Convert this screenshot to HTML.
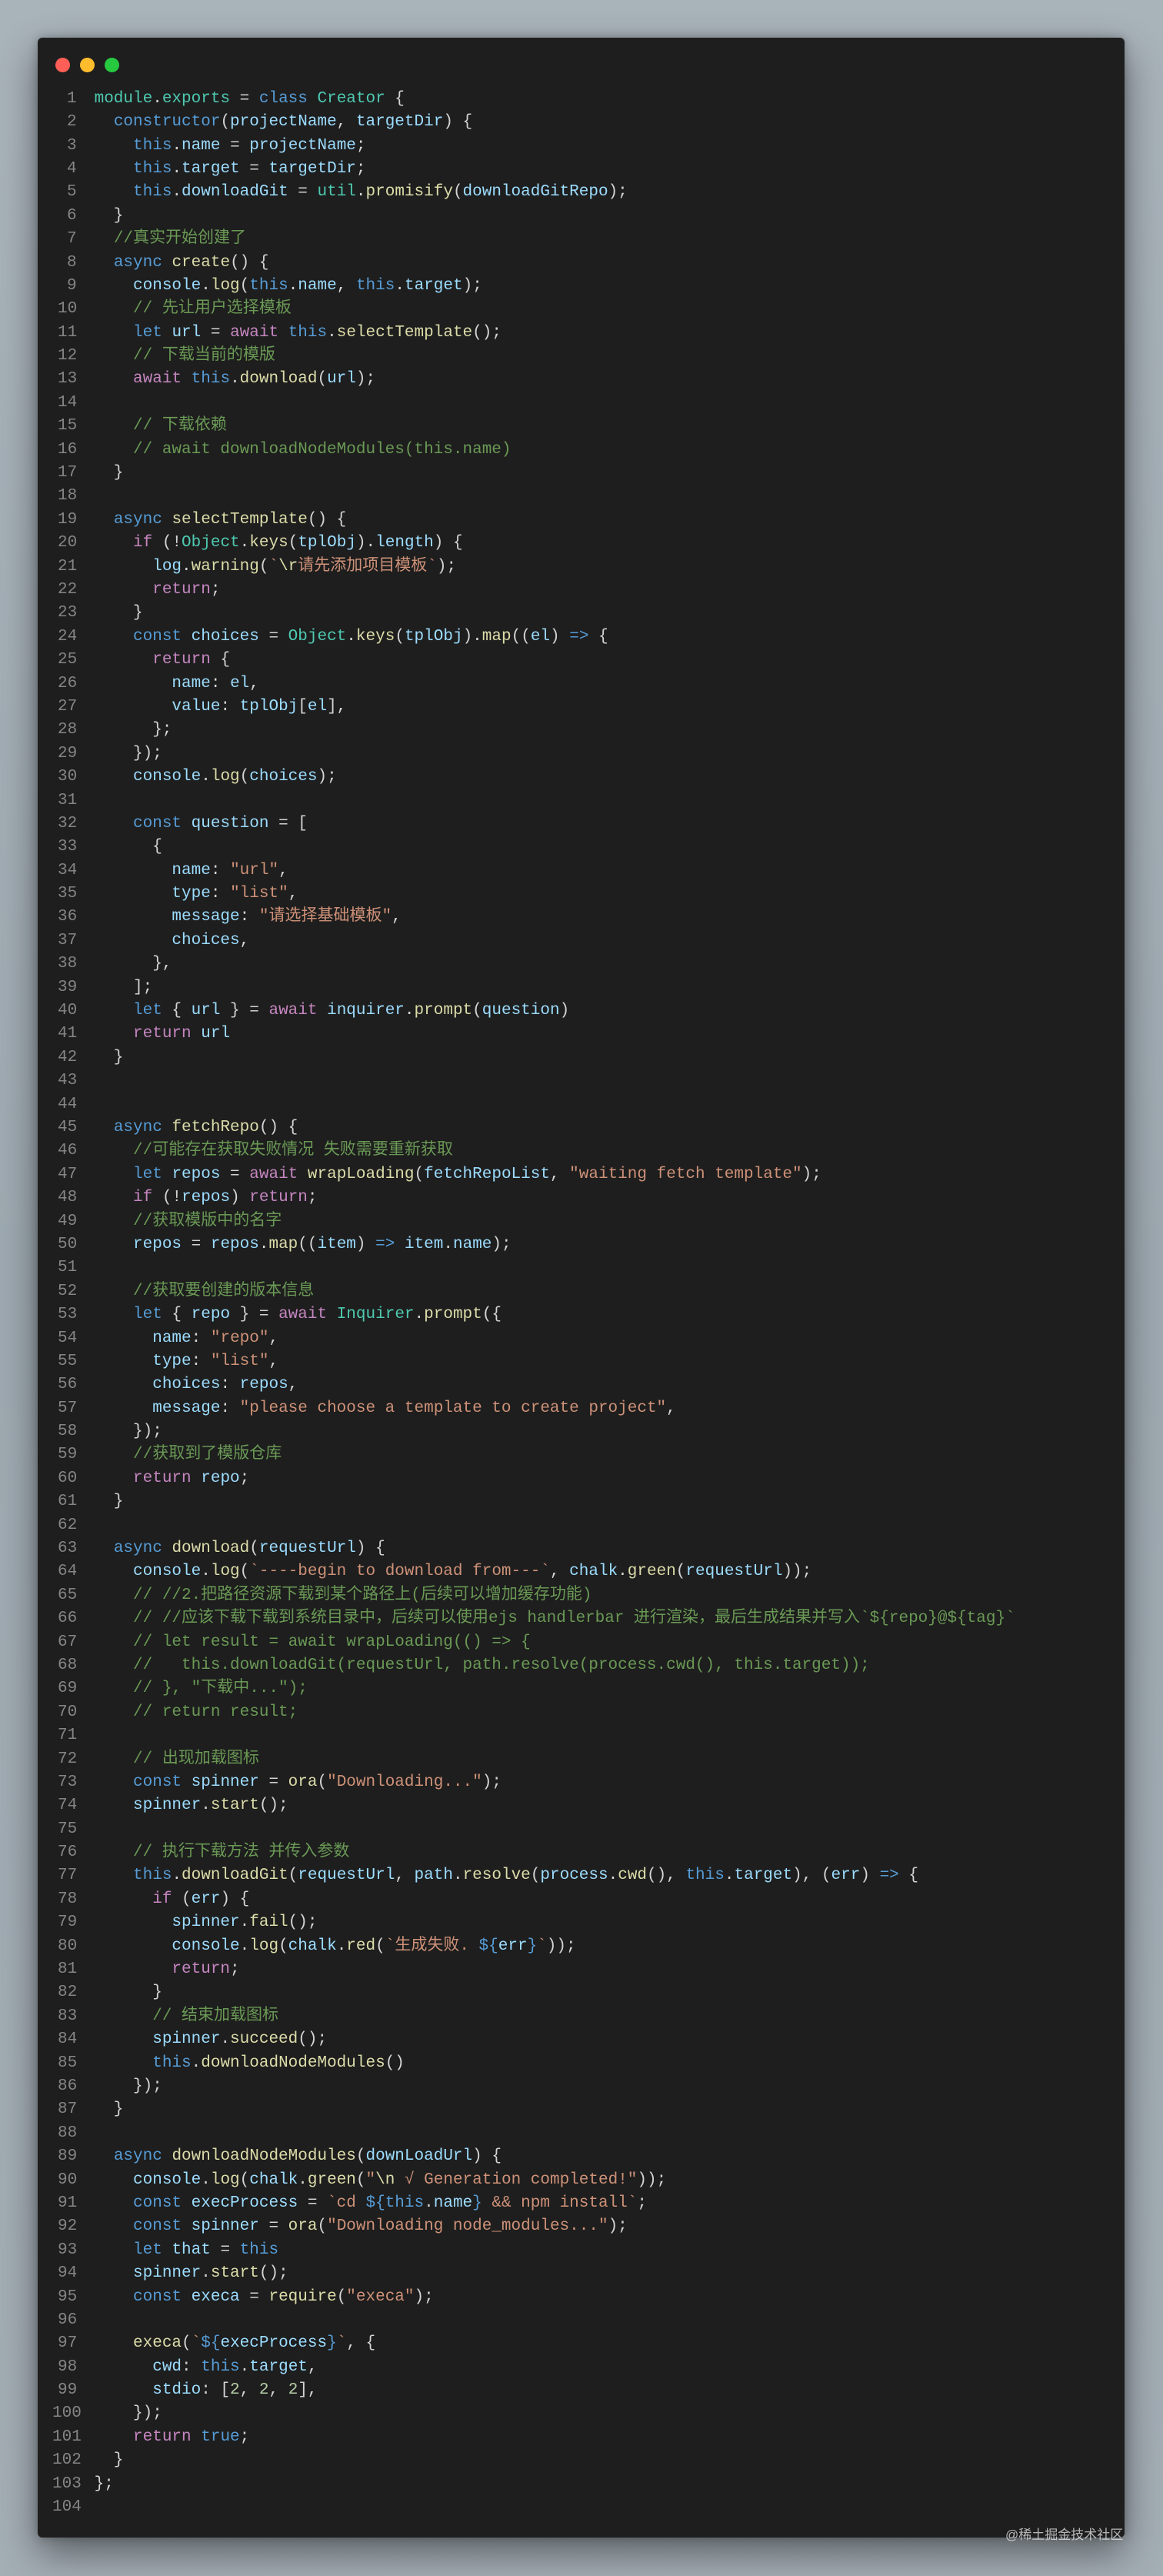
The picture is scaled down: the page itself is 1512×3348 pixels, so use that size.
<!DOCTYPE html>
<html><head><meta charset="utf-8">
<style>
html,body{margin:0;padding:0}
body{width:1512px;height:3348px;background:linear-gradient(180deg,#a9b3ba 0%,#9ea9b1 50%,#a4aeb5 100%);position:relative;overflow:hidden}
.card{position:absolute;left:49px;top:49px;width:1413px;height:3249px;background:#1e1e1e;border-radius:6px;box-shadow:0 20px 50px rgba(0,0,0,.45),0 0 12px rgba(0,0,0,.25)}
.dot{position:absolute;top:75px;width:19px;height:19px;border-radius:50%}
.code,.gut{position:absolute;top:113.8px;font-family:"Liberation Mono","Noto Sans CJK SC",monospace;font-size:21px;line-height:30.4px;white-space:normal;color:#d4d4d4}
.code{left:122.6px}
.gut{left:0;width:120px;color:#858585}
.gut div,.code div{height:30.4px;white-space:pre}
.k{color:#569cd6}.c{color:#c586c0}.f{color:#dcdcaa}.v{color:#9cdcfe}.t{color:#4ec9b0}.s{color:#ce9178}.m{color:#6a9955}.n{color:#b5cea8}
.wm{position:absolute;left:1307px;top:3280px;font-family:"Liberation Sans","Noto Sans CJK SC",sans-serif;font-size:17px;color:rgba(235,235,235,.75)}
</style></head><body>
<div class="card"></div>
<div class="dot" style="left:72px;background:#ff5f56"></div>
<div class="dot" style="left:104px;background:#ffbd2e"></div>
<div class="dot" style="left:136px;background:#27c93f"></div>
<div class="code">
<div><span class="t">module</span>.<span class="t">exports</span> = <span class="k">class</span> <span class="t">Creator</span> {</div>
<div>  <span class="k">constructor</span>(<span class="v">projectName</span>, <span class="v">targetDir</span>) {</div>
<div>    <span class="k">this</span>.<span class="v">name</span> = <span class="v">projectName</span>;</div>
<div>    <span class="k">this</span>.<span class="v">target</span> = <span class="v">targetDir</span>;</div>
<div>    <span class="k">this</span>.<span class="v">downloadGit</span> = <span class="t">util</span>.<span class="f">promisify</span>(<span class="v">downloadGitRepo</span>);</div>
<div>  }</div>
<div>  <span class="m">//真实开始创建了</span></div>
<div>  <span class="k">async</span> <span class="f">create</span>() {</div>
<div>    <span class="v">console</span>.<span class="f">log</span>(<span class="k">this</span>.<span class="v">name</span>, <span class="k">this</span>.<span class="v">target</span>);</div>
<div>    <span class="m">// 先让用户选择模板</span></div>
<div>    <span class="k">let</span> <span class="v">url</span> = <span class="c">await</span> <span class="k">this</span>.<span class="f">selectTemplate</span>();</div>
<div>    <span class="m">// 下载当前的模版</span></div>
<div>    <span class="c">await</span> <span class="k">this</span>.<span class="f">download</span>(<span class="v">url</span>);</div>
<div> </div>
<div>    <span class="m">// 下载依赖</span></div>
<div>    <span class="m">// await downloadNodeModules(this.name)</span></div>
<div>  }</div>
<div> </div>
<div>  <span class="k">async</span> <span class="f">selectTemplate</span>() {</div>
<div>    <span class="c">if</span> (!<span class="t">Object</span>.<span class="f">keys</span>(<span class="v">tplObj</span>).<span class="v">length</span>) {</div>
<div>      <span class="v">log</span>.<span class="f">warning</span>(<span class="s">`</span><span class="f">\r</span><span class="s">请先添加项目模板`</span>);</div>
<div>      <span class="c">return</span>;</div>
<div>    }</div>
<div>    <span class="k">const</span> <span class="v">choices</span> = <span class="t">Object</span>.<span class="f">keys</span>(<span class="v">tplObj</span>).<span class="f">map</span>((<span class="v">el</span>) <span class="k">=&gt;</span> {</div>
<div>      <span class="c">return</span> {</div>
<div>        <span class="v">name</span>: <span class="v">el</span>,</div>
<div>        <span class="v">value</span>: <span class="v">tplObj</span>[<span class="v">el</span>],</div>
<div>      };</div>
<div>    });</div>
<div>    <span class="v">console</span>.<span class="f">log</span>(<span class="v">choices</span>);</div>
<div> </div>
<div>    <span class="k">const</span> <span class="v">question</span> = [</div>
<div>      {</div>
<div>        <span class="v">name</span>: <span class="s">"url"</span>,</div>
<div>        <span class="v">type</span>: <span class="s">"list"</span>,</div>
<div>        <span class="v">message</span>: <span class="s">"请选择基础模板"</span>,</div>
<div>        <span class="v">choices</span>,</div>
<div>      },</div>
<div>    ];</div>
<div>    <span class="k">let</span> { <span class="v">url</span> } = <span class="c">await</span> <span class="v">inquirer</span>.<span class="f">prompt</span>(<span class="v">question</span>)</div>
<div>    <span class="c">return</span> <span class="v">url</span></div>
<div>  }</div>
<div> </div>
<div> </div>
<div>  <span class="k">async</span> <span class="f">fetchRepo</span>() {</div>
<div>    <span class="m">//可能存在获取失败情况 失败需要重新获取</span></div>
<div>    <span class="k">let</span> <span class="v">repos</span> = <span class="c">await</span> <span class="f">wrapLoading</span>(<span class="v">fetchRepoList</span>, <span class="s">"waiting fetch template"</span>);</div>
<div>    <span class="c">if</span> (!<span class="v">repos</span>) <span class="c">return</span>;</div>
<div>    <span class="m">//获取模版中的名字</span></div>
<div>    <span class="v">repos</span> = <span class="v">repos</span>.<span class="f">map</span>((<span class="v">item</span>) <span class="k">=&gt;</span> <span class="v">item</span>.<span class="v">name</span>);</div>
<div> </div>
<div>    <span class="m">//获取要创建的版本信息</span></div>
<div>    <span class="k">let</span> { <span class="v">repo</span> } = <span class="c">await</span> <span class="t">Inquirer</span>.<span class="f">prompt</span>({</div>
<div>      <span class="v">name</span>: <span class="s">"repo"</span>,</div>
<div>      <span class="v">type</span>: <span class="s">"list"</span>,</div>
<div>      <span class="v">choices</span>: <span class="v">repos</span>,</div>
<div>      <span class="v">message</span>: <span class="s">"please choose a template to create project"</span>,</div>
<div>    });</div>
<div>    <span class="m">//获取到了模版仓库</span></div>
<div>    <span class="c">return</span> <span class="v">repo</span>;</div>
<div>  }</div>
<div> </div>
<div>  <span class="k">async</span> <span class="f">download</span>(<span class="v">requestUrl</span>) {</div>
<div>    <span class="v">console</span>.<span class="f">log</span>(<span class="s">`----begin to download from---`</span>, <span class="v">chalk</span>.<span class="f">green</span>(<span class="v">requestUrl</span>));</div>
<div>    <span class="m">// //2.把路径资源下载到某个路径上(后续可以增加缓存功能)</span></div>
<div>    <span class="m">// //应该下载下载到系统目录中，后续可以使用ejs handlerbar 进行渲染，最后生成结果并写入`${repo}@${tag}`</span></div>
<div>    <span class="m">// let result = await wrapLoading(() =&gt; {</span></div>
<div>    <span class="m">//   this.downloadGit(requestUrl, path.resolve(process.cwd(), this.target));</span></div>
<div>    <span class="m">// }, "下载中...");</span></div>
<div>    <span class="m">// return result;</span></div>
<div> </div>
<div>    <span class="m">// 出现加载图标</span></div>
<div>    <span class="k">const</span> <span class="v">spinner</span> = <span class="f">ora</span>(<span class="s">"Downloading..."</span>);</div>
<div>    <span class="v">spinner</span>.<span class="f">start</span>();</div>
<div> </div>
<div>    <span class="m">// 执行下载方法 并传入参数</span></div>
<div>    <span class="k">this</span>.<span class="f">downloadGit</span>(<span class="v">requestUrl</span>, <span class="v">path</span>.<span class="f">resolve</span>(<span class="v">process</span>.<span class="f">cwd</span>(), <span class="k">this</span>.<span class="v">target</span>), (<span class="v">err</span>) <span class="k">=&gt;</span> {</div>
<div>      <span class="c">if</span> (<span class="v">err</span>) {</div>
<div>        <span class="v">spinner</span>.<span class="f">fail</span>();</div>
<div>        <span class="v">console</span>.<span class="f">log</span>(<span class="v">chalk</span>.<span class="f">red</span>(<span class="s">`生成失败. </span><span class="k">${</span><span class="v">err</span><span class="k">}</span><span class="s">`</span>));</div>
<div>        <span class="c">return</span>;</div>
<div>      }</div>
<div>      <span class="m">// 结束加载图标</span></div>
<div>      <span class="v">spinner</span>.<span class="f">succeed</span>();</div>
<div>      <span class="k">this</span>.<span class="f">downloadNodeModules</span>()</div>
<div>    });</div>
<div>  }</div>
<div> </div>
<div>  <span class="k">async</span> <span class="f">downloadNodeModules</span>(<span class="v">downLoadUrl</span>) {</div>
<div>    <span class="v">console</span>.<span class="f">log</span>(<span class="v">chalk</span>.<span class="f">green</span>(<span class="s">"</span><span class="f">\n</span><span class="s"> √ Generation completed!"</span>));</div>
<div>    <span class="k">const</span> <span class="v">execProcess</span> = <span class="s">`cd </span><span class="k">${this</span>.<span class="v">name</span><span class="k">}</span><span class="s"> &amp;&amp; npm install`</span>;</div>
<div>    <span class="k">const</span> <span class="v">spinner</span> = <span class="f">ora</span>(<span class="s">"Downloading node_modules..."</span>);</div>
<div>    <span class="k">let</span> <span class="v">that</span> = <span class="k">this</span></div>
<div>    <span class="v">spinner</span>.<span class="f">start</span>();</div>
<div>    <span class="k">const</span> <span class="v">execa</span> = <span class="f">require</span>(<span class="s">"execa"</span>);</div>
<div> </div>
<div>    <span class="f">execa</span>(<span class="s">`</span><span class="k">${</span><span class="v">execProcess</span><span class="k">}</span><span class="s">`</span>, {</div>
<div>      <span class="v">cwd</span>: <span class="k">this</span>.<span class="v">target</span>,</div>
<div>      <span class="v">stdio</span>: [<span class="n">2</span>, <span class="n">2</span>, <span class="n">2</span>],</div>
<div>    });</div>
<div>    <span class="c">return</span> <span class="k">true</span>;</div>
<div>  }</div>
<div>};</div>
<div> </div>
</div>
<div class="gut">
<div style="padding-left:87px">1</div><div style="padding-left:87px">2</div><div style="padding-left:87px">3</div><div style="padding-left:87px">4</div><div style="padding-left:87px">5</div><div style="padding-left:87px">6</div><div style="padding-left:87px">7</div><div style="padding-left:87px">8</div><div style="padding-left:87px">9</div>
<div style="padding-left:75px">10</div><div style="padding-left:75px">11</div><div style="padding-left:75px">12</div><div style="padding-left:75px">13</div><div style="padding-left:75px">14</div><div style="padding-left:75px">15</div><div style="padding-left:75px">16</div><div style="padding-left:75px">17</div><div style="padding-left:75px">18</div><div style="padding-left:75px">19</div>
<div style="padding-left:75px">20</div><div style="padding-left:75px">21</div><div style="padding-left:75px">22</div><div style="padding-left:75px">23</div><div style="padding-left:75px">24</div><div style="padding-left:75px">25</div><div style="padding-left:75px">26</div><div style="padding-left:75px">27</div><div style="padding-left:75px">28</div><div style="padding-left:75px">29</div>
<div style="padding-left:75px">30</div><div style="padding-left:75px">31</div><div style="padding-left:75px">32</div><div style="padding-left:75px">33</div><div style="padding-left:75px">34</div><div style="padding-left:75px">35</div><div style="padding-left:75px">36</div><div style="padding-left:75px">37</div><div style="padding-left:75px">38</div><div style="padding-left:75px">39</div>
<div style="padding-left:75px">40</div><div style="padding-left:75px">41</div><div style="padding-left:75px">42</div><div style="padding-left:75px">43</div><div style="padding-left:75px">44</div><div style="padding-left:75px">45</div><div style="padding-left:75px">46</div><div style="padding-left:75px">47</div><div style="padding-left:75px">48</div><div style="padding-left:75px">49</div>
<div style="padding-left:75px">50</div><div style="padding-left:75px">51</div><div style="padding-left:75px">52</div><div style="padding-left:75px">53</div><div style="padding-left:75px">54</div><div style="padding-left:75px">55</div><div style="padding-left:75px">56</div><div style="padding-left:75px">57</div><div style="padding-left:75px">58</div><div style="padding-left:75px">59</div>
<div style="padding-left:75px">60</div><div style="padding-left:75px">61</div><div style="padding-left:75px">62</div><div style="padding-left:75px">63</div><div style="padding-left:75px">64</div><div style="padding-left:75px">65</div><div style="padding-left:75px">66</div><div style="padding-left:75px">67</div><div style="padding-left:75px">68</div><div style="padding-left:75px">69</div>
<div style="padding-left:75px">70</div><div style="padding-left:75px">71</div><div style="padding-left:75px">72</div><div style="padding-left:75px">73</div><div style="padding-left:75px">74</div><div style="padding-left:75px">75</div><div style="padding-left:75px">76</div><div style="padding-left:75px">77</div><div style="padding-left:75px">78</div><div style="padding-left:75px">79</div>
<div style="padding-left:75px">80</div><div style="padding-left:75px">81</div><div style="padding-left:75px">82</div><div style="padding-left:75px">83</div><div style="padding-left:75px">84</div><div style="padding-left:75px">85</div><div style="padding-left:75px">86</div><div style="padding-left:75px">87</div><div style="padding-left:75px">88</div><div style="padding-left:75px">89</div>
<div style="padding-left:75px">90</div><div style="padding-left:75px">91</div><div style="padding-left:75px">92</div><div style="padding-left:75px">93</div><div style="padding-left:75px">94</div><div style="padding-left:75px">95</div><div style="padding-left:75px">96</div><div style="padding-left:75px">97</div><div style="padding-left:75px">98</div><div style="padding-left:75px">99</div>
<div style="padding-left:68px">100</div><div style="padding-left:68px">101</div><div style="padding-left:68px">102</div><div style="padding-left:68px">103</div><div style="padding-left:68px">104</div>
</div>
<div class="wm">@稀土掘金技术社区</div>
</body></html>
